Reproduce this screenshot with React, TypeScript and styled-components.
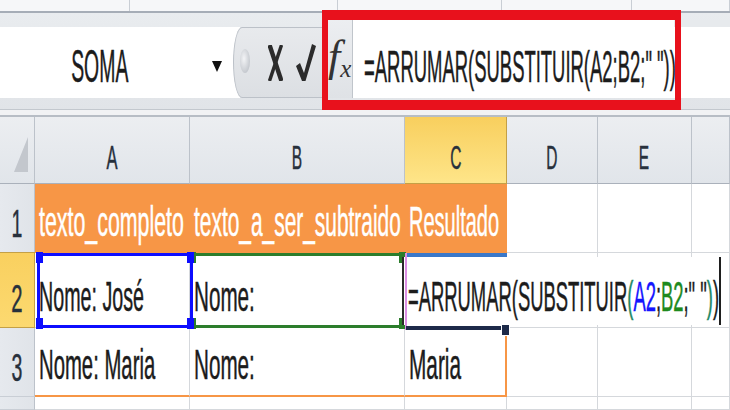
import React, { useLayoutEffect, useRef, useState } from "react";
import styled, { createGlobalStyle } from "styled-components";

const Global = createGlobalStyle`
  html, body { margin: 0; padding: 0; background: #fff; overflow: hidden; }
  body { font-family: "Liberation Sans", Arial, sans-serif; }
  #root { width: 730px; height: 410px; }
`;

const ORANGE = "#f79646";
const GRID = "#d5d8dc";
const HEAD_LINE = "#bcc2ca";

const Page = styled.div`
  position: relative;
  width: 730px;
  height: 410px;
  overflow: hidden;
  background: #fff;
  display: flex;
  flex-direction: column;
`;

/* ---------- fitted text ---------- */
const FitSpan = styled.span<{ $origin: string }>`
  display: inline-block;
  flex-shrink: 0;
  white-space: pre;
  line-height: 1;
  -webkit-text-stroke: 0.5px currentColor;
  transform-origin: ${(p) => p.$origin} center;
`;

type FitProps = { w?: number; scale?: number; origin?: string; children: React.ReactNode };
function Fit({ w, scale = 0.48, origin = "left", children }: FitProps) {
  const ref = useRef<HTMLSpanElement>(null);
  const [s, setS] = useState(scale);
  useLayoutEffect(() => {
    if (!w) return;
    const measure = () => {
      const el = ref.current;
      if (el && el.offsetWidth > 0) setS(w / el.offsetWidth);
    };
    measure();
    if (document.fonts && document.fonts.ready) document.fonts.ready.then(measure);
  }, [w]);
  return (
    <FitSpan ref={ref} $origin={origin} style={{ transform: `scaleX(${s})` }}>
      {children}
    </FitSpan>
  );
}

/* ---------- top strip ---------- */
const TopStrip = styled.div`
  height: 13px;
  flex: none;
  box-sizing: border-box;
  display: flex;
  background: #f6f7f9;
  border-bottom: 2px solid #a6adb7;
`;
const StripCell = styled.div<{ $w?: number }>`
  ${(p) => (p.$w ? `width:${p.$w}px; flex:none;` : "flex:1;")}
  box-sizing: border-box;
  border-right: 1px solid #c9ced5;
`;

/* ---------- formula bar ---------- */
const FormulaBar = styled.div`
  height: 97px;
  flex: none;
  box-sizing: border-box;
  display: flex;
  align-items: flex-start;
  padding-top: 14px;
  background: linear-gradient(#e9ecef, #e1e4e8);
  border-bottom: 1px solid #c3c8ce;
`;

const NameBox = styled.div`
  width: 240px;
  height: 71px;
  flex: none;
  background: #fff;
  display: grid;
  grid-template-columns: 200px 1fr;
  align-items: end;
  color: #1b1b1b;
`;
const NameText = styled.div`
  display: flex;
  justify-content: center;
  padding-bottom: 9px;
  font-size: 46px;
`;
const DropArrow = styled.div`
  width: 0;
  height: 0;
  align-self: center;
  margin: 8px 0 0 12px;
  border-left: 5px solid transparent;
  border-right: 5px solid transparent;
  border-top: 11px solid #111;
`;

const ControlPill = styled.div`
  margin-left: -7px;
  width: 95px;
  height: 71px;
  flex: none;
  box-sizing: border-box;
  background: linear-gradient(#e8eaed, #dcdfe3);
  border: 1px solid #bcc1c8;
  border-right: none;
  border-radius: 9px 0 0 9px / 36px 0 0 36px;
  display: flex;
  align-items: center;
  padding-left: 6px;
`;
const Grip = styled.div`
  width: 10px;
  height: 24px;
  flex: none;
  margin-top: -4px;
  border-radius: 50%;
  background: radial-gradient(ellipse at 40% 40%, #f3f4f6, #b3b8bf);
`;
const IconSlot = styled.div<{ $ml: number }>`
  margin-left: ${(p) => p.$ml}px;
  display: flex;
  flex: none;
`;

const FxButton = styled.div`
  width: 25px;
  height: 78px;
  margin-top: -7px;
  flex: none;
  box-sizing: border-box;
  background: linear-gradient(#eceef1, #dfe2e6);
  border-right: 1px solid #c0c5cb;
  display: flex;
  align-items: flex-start;
  justify-content: flex-start;
  padding: 15px 0 0 0;
  font-family: "Liberation Serif", "Times New Roman", serif;
  font-style: italic;
  color: #333;
`;
const FxF = styled.span`
  font-size: 44px;
  line-height: 1;
`;
const FxX = styled.span`
  font-size: 25px;
  line-height: 1;
  margin: 21px 0 0 0;
`;

const FormulaInput = styled.div`
  flex: 1;
  height: 78px;
  margin-top: -7px;
  box-sizing: border-box;
  background:
    linear-gradient(#fff, #fff) 0 0 / 321px 100% no-repeat,
    linear-gradient(#fff, #fff) 0 7px / 100% 100% no-repeat,
    #e7eaed;
  display: flex;
  align-items: flex-end;
  padding: 0 0 9px 11px;
  overflow: hidden;
  font-size: 45px;
  color: #1c1c1c;
`;

const GapStrip = styled.div`
  height: 7px;
  flex: none;
  box-sizing: border-box;
  background: #f1f2f4;
  border-bottom: 2px solid #b7bdc5;
`;

/* ---------- red annotation ---------- */
const Highlight = styled.div`
  position: absolute;
  left: 322px;
  top: 10px;
  width: 359px;
  height: 100px;
  box-sizing: border-box;
  border-style: solid;
  border-color: #e8111c;
  border-width: 10px 6px;
  pointer-events: none;
  z-index: 10;
`;

/* ---------- sheet ---------- */
const Sheet = styled.div`
  flex: 1;
  display: grid;
  grid-template-columns: 35px 155px 215px 102px 91px 94px 1fr;
  grid-template-rows: 67px 69px 75px 69px 1fr;
`;

const Corner = styled.div`
  box-sizing: border-box;
  background: linear-gradient(#eceef1, #e1e5ea);
  border-right: 1px solid ${HEAD_LINE};
  border-bottom: 1px solid #aab1bb;
  display: flex;
  align-items: flex-end;
  justify-content: flex-end;
  padding: 0 6px 11px 0;
`;

const ColHead = styled.div<{ $active?: boolean }>`
  box-sizing: border-box;
  display: flex;
  justify-content: center;
  align-items: flex-end;
  padding-bottom: 9px;
  font-size: 33px;
  color: #27303c;
  background: ${(p) =>
    p.$active ? "linear-gradient(#f8cf5e, #fee589)" : "linear-gradient(#eceef1, #e1e5ea)"};
  border-right: 1px solid ${(p) => (p.$active ? "#c4a046" : HEAD_LINE)};
  border-bottom: 1px solid ${(p) => (p.$active ? "#c4a046" : "#aab1bb")};
`;

const RowHead = styled.div<{ $active?: boolean }>`
  box-sizing: border-box;
  display: flex;
  justify-content: center;
  align-items: flex-end;
  padding-bottom: 9px;
  font-size: 39px;
  color: #27303c;
  background: ${(p) =>
    p.$active ? "linear-gradient(#f9d05f, #fcd970)" : "linear-gradient(90deg, #e6e9ee, #e0e4e9)"};
  border-right: 1px solid ${(p) => (p.$active ? "#c4a046" : HEAD_LINE)};
  border-bottom: 1px solid ${(p) => (p.$active ? "#c4a046" : "#c9ced5")};
  ${(p) => (p.$active ? "border-top: 1px solid #c4a046; margin-top: -1px;" : "")}
`;

const Cell = styled.div<{ $fill?: boolean; $obottom?: boolean; $oright?: boolean }>`
  position: relative;
  box-sizing: border-box;
  display: flex;
  align-items: flex-end;
  padding: 0 0 9px 4px;
  font-size: 42px;
  color: ${(p) => (p.$fill ? "#fff" : "#1c1c1c")};
  background: ${(p) => (p.$fill ? ORANGE : "#fff")};
  border-right: ${(p) => (p.$oright ? `2px solid ${ORANGE}` : `1px solid ${p.$fill ? ORANGE : GRID}`)};
  border-bottom: ${(p) => (p.$obottom ? `2px solid ${ORANGE}` : `1px solid ${p.$fill ? ORANGE : GRID}`)};
`;

/* reference outline boxes (overlays) */
const RefBox = styled.div<{ $color: string; $l: number; $w: number; $z: number }>`
  position: absolute;
  left: ${(p) => p.$l}px;
  top: 0;
  width: ${(p) => p.$w}px;
  height: 75px;
  box-sizing: border-box;
  border: 3px solid ${(p) => p.$color};
  z-index: ${(p) => p.$z};
  pointer-events: none;
`;
const Handle = styled.div<{ $color: string; $corner: "tl" | "tr" | "bl" | "br" }>`
  position: absolute;
  width: 7px;
  height: 11px;
  background: ${(p) => p.$color};
  ${(p) => (p.$corner[0] === "t" ? "top: -4px;" : "bottom: -4px;")}
  ${(p) => (p.$corner[1] === "l" ? "left: -4px;" : "right: -4px;")}
`;

function Ref({ color, l, w, z }: { color: string; l: number; w: number; z: number }) {
  return (
    <RefBox $color={color} $l={l} $w={w} $z={z}>
      <Handle $color={color} $corner="tl" />
      <Handle $color={color} $corner="tr" />
      <Handle $color={color} $corner="bl" />
      <Handle $color={color} $corner="br" />
    </RefBox>
  );
}

/* in-cell editor and active cell marks */
const Editor = styled.div`
  position: absolute;
  left: -3px;
  top: 4px;
  width: 319px;
  height: 68px;
  box-sizing: border-box;
  background: #fff;
  border-left: 2px solid #2a2a2a;
  border-right: 2px solid #1e1e1e;
  display: flex;
  align-items: flex-end;
  padding: 0 0 7px 4px;
  z-index: 4;
`;
const Mark = styled.div<{ $l: number; $t: number; $w: number; $h: number; $bg: string }>`
  position: absolute;
  left: ${(p) => p.$l}px;
  top: ${(p) => p.$t}px;
  width: ${(p) => p.$w}px;
  height: ${(p) => p.$h}px;
  background: ${(p) => p.$bg};
  z-index: 5;
`;
const FillHandle = styled.div`
  position: absolute;
  left: 96px;
  top: 71px;
  width: 7px;
  height: 10px;
  background: #1d2a49;
  border: 1px solid #fff;
  z-index: 6;
`;

const Tok = styled.span<{ $c: string }>`
  color: ${(p) => p.$c};
`;

const DARK = "#1c1c1c";
const PAREN = "#1f8a66";

export default function App() {
  return (
    <>
      <Global />
      <Page>
        <TopStrip>
          <StripCell $w={130} />
          <StripCell $w={208} />
          <StripCell $w={164} />
          <StripCell $w={130} />
          <StripCell />
        </TopStrip>

        <FormulaBar>
          <NameBox>
            <NameText>
              <Fit w={57} origin="center">SOMA</Fit>
            </NameText>
            <DropArrow />
          </NameBox>
          <ControlPill>
            <Grip />
            <IconSlot $ml={18}>
              <svg width="15" height="36" viewBox="0 0 15 36">
                <line x1="1.5" y1="0" x2="13.5" y2="36" stroke="#2b2b2b" strokeWidth="4.5" />
                <line x1="13.5" y1="0" x2="1.5" y2="36" stroke="#2b2b2b" strokeWidth="3.4" />
              </svg>
            </IconSlot>
            <IconSlot $ml={13}>
              <svg width="20" height="37" viewBox="0 0 20 37">
                <polygon points="0,22 4,19 8,29 16,0 20,2 9.5,37 6,37" fill="#2b2b2b" />
              </svg>
            </IconSlot>
          </ControlPill>
          <FxButton>
            <FxF>f</FxF>
            <FxX>x</FxX>
          </FxButton>
          <FormulaInput>
            <Fit w={312}>=ARRUMAR(SUBSTITUIR(A2;B2;" "))</Fit>
          </FormulaInput>
        </FormulaBar>

        <GapStrip />

        <Sheet>
          {/* header row */}
          <Corner>
            <svg width="14" height="35" viewBox="0 0 14 35">
              <polygon points="14,0 14,35 0,35" fill="#c3c7cd" />
            </svg>
          </Corner>
          <ColHead><Fit scale={0.5} origin="center">A</Fit></ColHead>
          <ColHead><Fit scale={0.47} origin="center">B</Fit></ColHead>
          <ColHead $active><Fit scale={0.47} origin="center">C</Fit></ColHead>
          <ColHead><Fit scale={0.47} origin="center">D</Fit></ColHead>
          <ColHead><Fit scale={0.47} origin="center">E</Fit></ColHead>
          <ColHead />

          {/* row 1 */}
          <RowHead><Fit scale={0.5} origin="center">1</Fit></RowHead>
          <Cell $fill><Fit w={145}>texto_completo</Fit></Cell>
          <Cell $fill><Fit w={207}>texto_a_ser_subtraido</Fit></Cell>
          <Cell $fill><Fit w={90}>Resultado</Fit></Cell>
          <Cell />
          <Cell />
          <Cell />

          {/* row 2 */}
          <RowHead $active><Fit scale={0.52} origin="center">2</Fit></RowHead>
          <Cell>
            <Fit w={105}>Nome: José</Fit>
            <Ref color="#0d0dff" l={2} w={156} z={3} />
          </Cell>
          <Cell>
            <Fit w={61}>Nome:</Fit>
            <Ref color="#2c7d2c" l={0} w={215} z={2} />
          </Cell>
          <Cell>
            <Editor>
              <Fit w={311}>
                <Tok $c={DARK}>=ARRUMAR(SUBSTITUIR</Tok>
                <Tok $c={PAREN}>(</Tok>
                <Tok $c="#1414ff">A2</Tok>
                <Tok $c={DARK}>;</Tok>
                <Tok $c="#1e8a1e">B2</Tok>
                <Tok $c={DARK}>;" "</Tok>
                <Tok $c={PAREN}>)</Tok>
                <Tok $c={DARK}>)</Tok>
              </Fit>
            </Editor>
            <Mark $l={1} $t={0} $w={101} $h={4} $bg="#3a78c9" />
            <Mark $l={0} $t={0} $w={2} $h={77} $bg="#dc8ee3" />
            <Mark $l={1} $t={73} $w={97} $h={4} $bg="#1d2a49" />
            <FillHandle />
          </Cell>
          <Cell />
          <Cell />
          <Cell />

          {/* row 3 */}
          <RowHead><Fit scale={0.5} origin="center">3</Fit></RowHead>
          <Cell $obottom><Fit w={116}>Nome: Maria</Fit></Cell>
          <Cell $obottom><Fit w={61}>Nome:</Fit></Cell>
          <Cell $obottom $oright><Fit w={52}>Maria</Fit></Cell>
          <Cell />
          <Cell />
          <Cell />

          {/* row 4 */}
          <RowHead />
          <Cell />
          <Cell />
          <Cell />
          <Cell />
          <Cell />
          <Cell />
        </Sheet>

        <Highlight />
      </Page>
    </>
  );
}
